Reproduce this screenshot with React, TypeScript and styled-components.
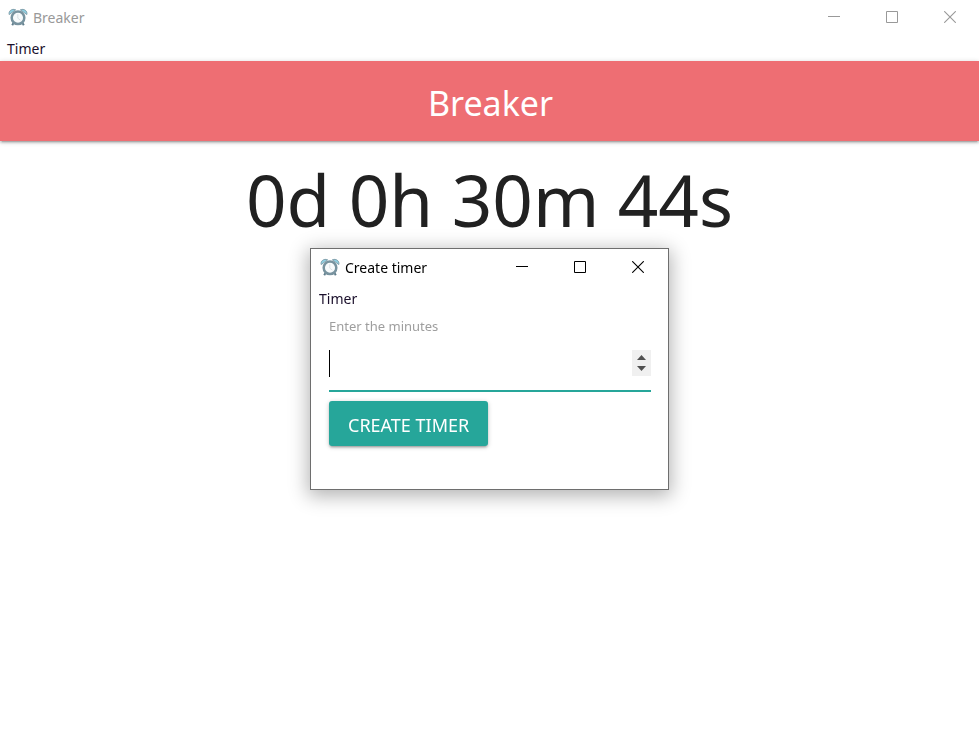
import React, { useState } from "react";
import styled, { createGlobalStyle } from "styled-components";

const GlobalStyle = createGlobalStyle`
  *, *::before, *::after { box-sizing: border-box; }
  body {
    margin: 0;
    background: #fff;
    color: #212121;
    font-family: "Noto Sans", "Open Sans", sans-serif;
  }
  button, input { font: inherit; }
`;

const MainWindow = styled.div`
  min-height: 100vh;
  display: flex;
  flex-direction: column;
`;

const TitleBar = styled.header<{ $active?: boolean }>`
  display: flex;
  align-items: flex-start;
  height: ${(p) => (p.$active ? 38 : 35)}px;
  padding: ${(p) => (p.$active ? "0 1px 0 9px" : "0 0 0 8px")};
  color: ${(p) => (p.$active ? "#000" : "#999")};
`;

const TitleLabel = styled.div`
  flex: 1;
  height: 100%;
  display: flex;
  align-items: center;
  gap: 5px;
  font-size: 14px;
  line-height: 20px;
`;

const WindowControls = styled.div`
  display: flex;
  height: calc(100% - 2px);
`;

const ControlButton = styled.button`
  width: 58px;
  border: 0;
  padding: 0;
  background: transparent;
  color: inherit;
  display: grid;
  place-items: center;
`;

const MenuBar = styled.nav<{ $compact?: boolean }>`
  display: flex;
  align-items: center;
  height: ${(p) => (p.$compact ? 24 : 26)}px;
  padding: ${(p) => (p.$compact ? "0 8px" : "2px 7px 0")};
`;

const MenuItem = styled.button`
  border: 0;
  padding: 0;
  background: transparent;
  color: #1a0f2b;
  font-size: 14px;
  line-height: 20px;
`;

const Banner = styled.div`
  position: relative;
  display: flex;
  align-items: center;
  justify-content: center;
  height: 80px;
  padding: 4px 0 0 2px;
  background: #ee6e73;
  box-shadow: 0 2px 2px 0 rgba(0, 0, 0, 0.14),
    0 3px 1px -2px rgba(0, 0, 0, 0.12), 0 1px 5px 0 rgba(0, 0, 0, 0.2);
`;

const BannerTitle = styled.h1`
  margin: 0;
  color: #fff;
  font-size: 34px;
  font-weight: 400;
  line-height: 48px;
`;

const Countdown = styled.p`
  margin: 19px 0 0;
  text-align: center;
  font-size: 71px;
  line-height: 80px;
`;

const DialogLayer = styled.div`
  position: fixed;
  inset: 0;
  display: grid;
  place-items: center;
`;

const Dialog = styled.section`
  width: 359px;
  border: 1px solid #6e6e6e;
  background: #fff;
  box-shadow: 0 4px 18px 2px rgba(0, 0, 0, 0.3);
`;

const TimerForm = styled.form`
  padding: 3px 17px 43px 18px;
`;

const FieldLabel = styled.label`
  display: block;
  color: #9e9e9e;
  font-size: 13px;
  line-height: 24px;
`;

const Field = styled.div`
  position: relative;
  display: flex;
  align-items: center;
  height: 54px;
  border-bottom: 2px solid #26a69a;
  margin-bottom: 9px;

  &::before {
    content: "";
    position: absolute;
    left: 0;
    top: 12px;
    width: 1px;
    height: 27px;
    background: #000;
  }
`;

const MinutesInput = styled.input`
  flex: 1;
  min-width: 0;
  height: 100%;
  border: 0;
  padding: 0;
  outline: 0;
  background: transparent;
  color: #212121;
  font-size: 18px;
  caret-color: transparent;
  appearance: textfield;

  &::-webkit-inner-spin-button {
    appearance: none;
    margin: 0;
  }
`;

const Stepper = styled.div`
  display: flex;
  flex-direction: column;
  width: 19px;
  height: 26px;
  margin-bottom: 2px;
  padding: 2px 0;
  background: #f0f0f0;
  color: #505050;
`;

const StepButton = styled.button`
  flex: 1;
  display: grid;
  place-items: center;
  border: 0;
  padding: 0;
  background: transparent;
  color: inherit;
`;

const SubmitButton = styled.button`
  display: block;
  height: 45px;
  border: 0;
  border-radius: 3px;
  padding: 2px 19px 0;
  background: #26a69a;
  color: #fff;
  font-size: 18px;
  line-height: 24px;
  text-transform: uppercase;
  box-shadow: 0 2px 2px 0 rgba(0, 0, 0, 0.14),
    0 3px 1px -2px rgba(0, 0, 0, 0.12), 0 1px 5px 0 rgba(0, 0, 0, 0.2);
`;

const Icon = styled.svg`
  display: block;
  flex: none;
`;

const AlarmClock = () => (
  <Icon width="20" height="20" viewBox="0 0 20 20" aria-hidden="true">
    <path d="M5.5 15 4.2 17.2M14.5 15 15.8 17.2" stroke="#607d8b" strokeWidth="2" />
    <circle cx="10" cy="9.8" r="6.3" fill="#f8fbfc" stroke="#78939f" strokeWidth="2.5" />
    <path d="M1.2 6.6C.2 3.2 3.8.2 7.6 1.8Z" fill="#8fd0e2" stroke="#7d9aa6" strokeWidth="0.9" />
    <path d="M18.8 6.6c1-3.4-2.6-6.4-6.4-4.8Z" fill="#8fd0e2" stroke="#7d9aa6" strokeWidth="0.9" />
    <path d="M9.8 6.2v4l2.6 2" fill="none" stroke="#d3dbdf" strokeWidth="0.8" />
  </Icon>
);

const Controls = () => (
  <WindowControls>
    <ControlButton type="button" aria-label="Minimize">
      <Icon width="12" height="12" viewBox="0 0 12 12">
        <path d="M0 5.5h12" stroke="currentColor" />
      </Icon>
    </ControlButton>
    <ControlButton type="button" aria-label="Maximize">
      <Icon width="12" height="12" viewBox="0 0 12 12">
        <path d="M.5.5h11v11H.5z" fill="none" stroke="currentColor" />
      </Icon>
    </ControlButton>
    <ControlButton type="button" aria-label="Close">
      <Icon width="12" height="12" viewBox="0 0 12 12">
        <path d="m.2.2 11.6 11.6M11.8.2.2 11.8" stroke="currentColor" strokeWidth="1.1" />
      </Icon>
    </ControlButton>
  </WindowControls>
);

export default function App() {
  const [minutes, setMinutes] = useState("");
  const step = (by: number) =>
    setMinutes((value) => String(Math.max(0, Number(value) + by)));

  return (
    <>
      <GlobalStyle />
      <MainWindow>
        <TitleBar>
          <TitleLabel>
            <AlarmClock />
            Breaker
          </TitleLabel>
          <Controls />
        </TitleBar>
        <MenuBar>
          <MenuItem type="button">Timer</MenuItem>
        </MenuBar>
        <Banner>
          <BannerTitle>Breaker</BannerTitle>
        </Banner>
        <Countdown>0d 0h 30m 44s</Countdown>
      </MainWindow>
      <DialogLayer>
        <Dialog role="dialog" aria-label="Create timer">
          <TitleBar $active>
            <TitleLabel>
              <AlarmClock />
              Create timer
            </TitleLabel>
            <Controls />
          </TitleBar>
          <MenuBar $compact>
            <MenuItem type="button">Timer</MenuItem>
          </MenuBar>
          <TimerForm onSubmit={(e) => e.preventDefault()}>
            <FieldLabel htmlFor="minutes">Enter the minutes</FieldLabel>
            <Field>
              <MinutesInput
                id="minutes"
                type="number"
                min="0"
                value={minutes}
                onChange={(e) => setMinutes(e.target.value)}
              />
              <Stepper>
                <StepButton type="button" aria-label="Increase" onClick={() => step(1)}>
                  <Icon width="9" height="5" viewBox="0 0 9 5">
                    <path d="M0 5 4.5 0 9 5z" fill="currentColor" />
                  </Icon>
                </StepButton>
                <StepButton type="button" aria-label="Decrease" onClick={() => step(-1)}>
                  <Icon width="9" height="5" viewBox="0 0 9 5">
                    <path d="M0 0 4.5 5 9 0z" fill="currentColor" />
                  </Icon>
                </StepButton>
              </Stepper>
            </Field>
            <SubmitButton type="submit">Create timer</SubmitButton>
          </TimerForm>
        </Dialog>
      </DialogLayer>
    </>
  );
}
